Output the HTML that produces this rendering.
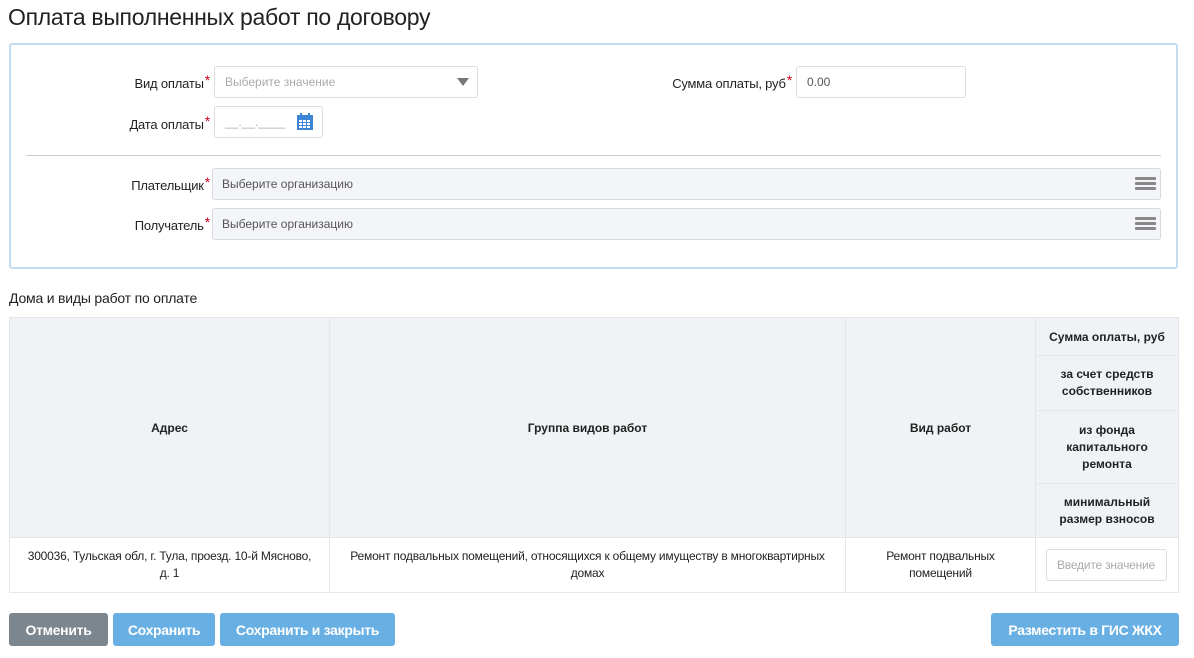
<!DOCTYPE html>
<html><head><meta charset="utf-8"><style>
*{box-sizing:border-box;margin:0;padding:0}
body{width:1194px;height:658px;background:#fff;font-family:"Liberation Sans",sans-serif;color:#222;position:relative;overflow:hidden}
.a{position:absolute}
h1{position:absolute;left:8px;top:4px;font-size:23px;font-weight:normal;color:#222;letter-spacing:-0.3px}
.panel{left:9px;top:43px;width:1169px;height:226px;border:2px solid #c3dcf0;border-radius:3px}
.lbl{font-size:13px;text-align:right;color:#222;letter-spacing:-0.2px}
.lbl i{color:#d0021b;font-style:normal;font-size:14px;vertical-align:3px;margin-left:1px}
.inp{border:1px solid #ddd;border-radius:3px;background:#fff;font-size:12px;color:#aaa;padding-left:10px;display:flex;align-items:center}
.org{border:1px solid #d6d9dd;background:#f3f5f8;border-radius:3px;font-size:12px;color:#555;padding-left:9px;display:flex;align-items:center}
.burger{position:absolute;right:4px;top:8px;width:21px}
.burger div{height:3px;background:#888;margin-bottom:2px;border-radius:1px}
table{position:absolute;left:9px;top:317px;border-collapse:collapse;font-size:12px}
td{border:1px solid #e3e7eb;text-align:center;vertical-align:middle}
.h{background:#f0f3f5;font-weight:bold;color:#222}
.btn{position:absolute;top:613px;height:33px;border-radius:3px;color:#fff;font-weight:bold;font-size:14px;display:flex;align-items:center;justify-content:center;letter-spacing:-0.3px}
</style></head><body>
<h1>Оплата выполненных работ по договору</h1>
<div class="a panel"></div>
<div class="a lbl" style="left:60px;top:72px;width:150px">Вид оплаты<i>*</i></div>
<div class="a inp" style="left:214px;top:66px;width:264px;height:32px">Выберите значение</div>
<div class="a" style="left:457px;top:78px;width:0;height:0;border-left:6px solid transparent;border-right:6px solid transparent;border-top:8px solid #777"></div>
<div class="a lbl" style="left:600px;top:72px;width:192px">Сумма оплаты, руб<i>*</i></div>
<div class="a inp" style="left:796px;top:66px;width:170px;height:32px;color:#555">0.00</div>
<div class="a lbl" style="left:60px;top:113px;width:150px">Дата оплаты<i>*</i></div>
<div class="a inp" style="left:214px;top:106px;width:109px;height:32px">__.__.____</div>
<svg class="a" style="left:297px;top:113px" width="16" height="17" viewBox="0 0 16 17"><rect x="0" y="2" width="16" height="15" fill="#3b84d6"/><rect x="3" y="0" width="2" height="4" fill="#3b84d6"/><rect x="11" y="0" width="2" height="4" fill="#3b84d6"/><g fill="#fff"><rect x="2" y="7" width="3" height="2"/><rect x="6" y="7" width="3" height="2"/><rect x="10" y="7" width="3" height="2"/><rect x="2" y="10" width="3" height="2"/><rect x="6" y="10" width="3" height="2"/><rect x="10" y="10" width="3" height="2"/><rect x="2" y="13" width="3" height="2"/><rect x="6" y="13" width="3" height="2"/><rect x="10" y="13" width="3" height="2"/></g></svg>
<div class="a" style="left:26px;top:155px;width:1135px;height:1px;background:#ccc"></div>
<div class="a lbl" style="left:60px;top:174px;width:150px">Плательщик<i>*</i></div>
<div class="a org" style="left:212px;top:168px;width:949px;height:32px">Выберите организацию<div class="burger"><div></div><div></div><div></div></div></div>
<div class="a lbl" style="left:60px;top:214px;width:150px">Получатель<i>*</i></div>
<div class="a org" style="left:212px;top:208px;width:949px;height:32px">Выберите организацию<div class="burger"><div></div><div></div><div></div></div></div>
<div class="a" style="left:9px;top:290px;font-size:14px;letter-spacing:-0.2px">Дома и виды работ по оплате</div>
<table>
<tr style="height:38px"><td class="h" rowspan="4" style="width:320px">Адрес</td><td class="h" rowspan="4" style="width:516px">Группа видов работ</td><td class="h" rowspan="4" style="width:190px">Вид работ</td><td class="h" style="width:143px">Сумма оплаты, руб</td></tr>
<tr style="height:55px"><td class="h" style="line-height:17px">за счет средств<br>собственников</td></tr>
<tr style="height:73px"><td class="h" style="line-height:17px">из фонда<br>капитального<br>ремонта</td></tr>
<tr style="height:54px"><td class="h" style="line-height:17px">минимальный<br>размер взносов</td></tr>
<tr style="height:55px;font-size:12px;line-height:17px;letter-spacing:-0.2px"><td style="padding:0 8px">300036, Тульская обл, г. Тула, проезд. 10-й Мясново,<br>д. 1</td><td>Ремонт подвальных помещений, относящихся к общему имуществу в многоквартирных<br>домах</td><td>Ремонт подвальных<br>помещений</td><td><div class="inp" style="width:121px;height:32px;margin-left:10px;font-size:12px;color:#aaa">Введите значение</div></td></tr>
</table>
<div class="btn" style="left:9px;width:99px;background:#7b868f">Отменить</div>
<div class="btn" style="left:113px;width:102px;background:#68b0e3">Сохранить</div>
<div class="btn" style="left:220px;width:175px;background:#68b0e3">Сохранить и закрыть</div>
<div class="btn" style="left:991px;width:188px;background:#68b0e3">Разместить в ГИС ЖКХ</div>
</body></html>
